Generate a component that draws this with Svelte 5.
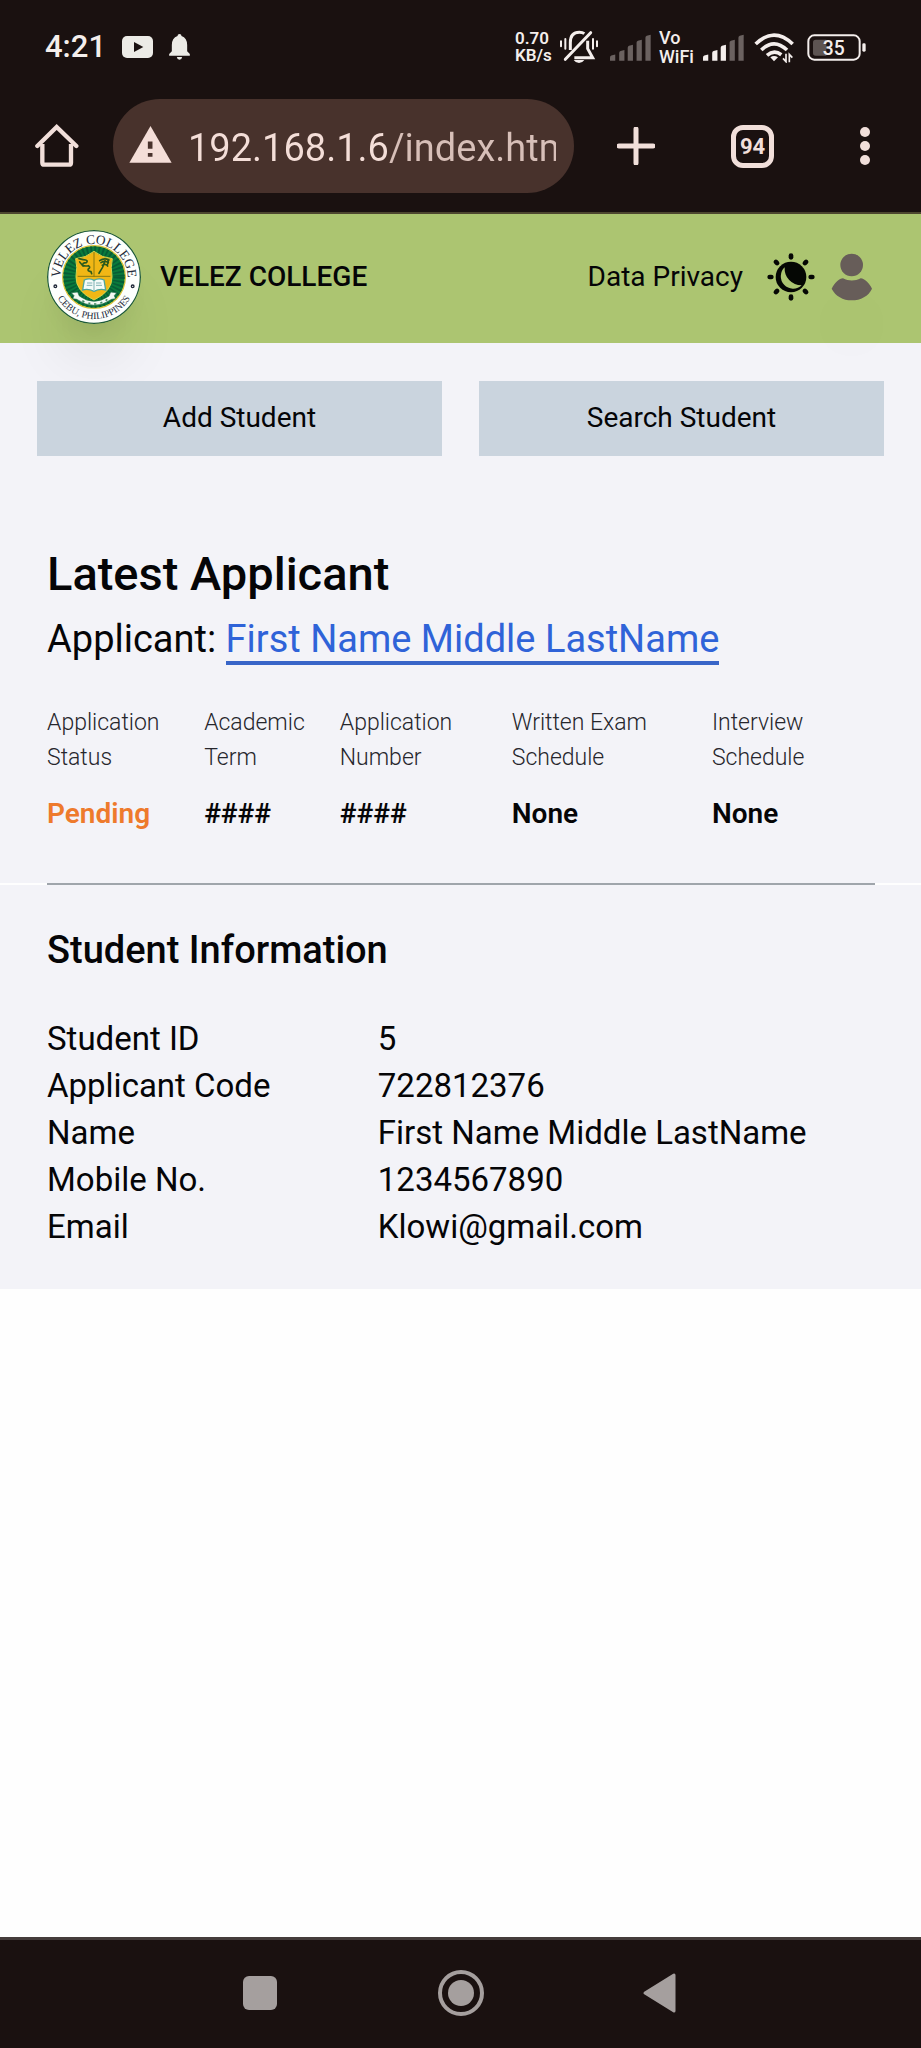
<script>
  const bars = [
    [0, 62],
    [28, 48],
    [54, 32],
    [81, 17],
    [108, 2],
  ];

  const rays = [0, 45, 90, 135, 180, 225, 270, 315];

  const summary = [
    { label: 'Application Status', value: 'Pending', tone: 'pending' },
    { label: 'Academic Term', value: '####', tone: '' },
    { label: 'Application Number', value: '####', tone: '' },
    { label: 'Written Exam Schedule', value: 'None', tone: '' },
    { label: 'Interview Schedule', value: 'None', tone: '' },
  ];

  const details = [
    ['Student ID', '5'],
    ['Applicant Code', '722812376'],
    ['Name', 'First Name Middle LastName'],
    ['Mobile No.', '1234567890'],
    ['Email', 'Klowi@gmail.com'],
  ];

  let address = $state('192.168.1.6/index.html');
</script>

{#snippet signal(active)}
  <svg class="signal" viewBox="0 0 125 81" width="41" height="27" aria-hidden="true">
    {#each bars as [x, top], i}
      <path
        d="M{x} 81V{top + 9}Q{x} {top + 5} {x + 4} {top + 3}L{x + 16} {top}V81Z"
        fill={i < active ? '#f4eeec' : '#6b6260'}
      />
    {/each}
  </svg>
{/snippet}

<div class="screen">
  <div class="chrome">
    <div class="status">
      <div class="status-left">
        <span class="time">4:21</span>
        <svg viewBox="366 105 93 66" width="31" height="22" aria-hidden="true">
          <rect x="366" y="105" width="93" height="66" rx="15" fill="#ecebe6" />
          <path d="M402 123L430 138L402 153Z" fill="#1a1110" />
        </svg>
        <svg viewBox="509 101 62 78" width="21" height="26" aria-hidden="true">
          <path
            d="M540 101q6 0 6 6q17 6 17 27v19l8 8v5H509v-5l8-8v-19q0-21 17-27q0-6 6-6ZM532 170h16q-1 8-8 8t-8-8Z"
            fill="#ecebe6"
          />
        </svg>
      </div>
      <div class="status-right">
        <span class="tiny rate"><span>0.70</span><span>KB/s</span></span>
        <svg viewBox="300 90 129 102" width="43" height="34" fill="none" stroke="#f4eeec" aria-hidden="true">
          <path d="M334 150V128C334 108 344 97 361 97C367 97 372 98 376 101M386 122V146L401 173H346" stroke-width="9" />
          <path d="M395 98L319 178" stroke-width="9" stroke-linecap="round" />
          <path d="M306 124v15M319 117v29M402 117v29M414 124v15" stroke-width="6" stroke-linecap="round" />
          <path d="M344 180h32q-6 9-16 9t-16-9Z" fill="#f4eeec" stroke="none" />
        </svg>
        {@render signal(0)}
        <span class="tiny vo"><span>Vo</span><span>WiFi</span></span>
        {@render signal(3)}
        <svg viewBox="876 92 141 96" width="47" height="32" fill="none" stroke="#f4eeec" aria-hidden="true">
          <path d="M887 131Q942 78 998 131M904 149Q942 112 981 149M921 165Q942 147 964 163" stroke-width="11" />
          <path d="M931 171Q942 163 954 171L942 183Z" fill="#f4eeec" stroke="none" />
          <path d="M978 160v24l-9-10M988 186v-24l9 10" stroke-width="5" />
        </svg>
        <svg viewBox="1040 98 177 81" width="59" height="27" aria-hidden="true">
          <rect x="1044" y="102" width="154" height="73" rx="18" fill="none" stroke="#f4eeec" stroke-width="6" />
          <path d="M1066 115h32v48h-32q-8 0-8-8v-32q0-8 8-8Z" fill="#5d5452" />
          <rect x="1206" y="126" width="10" height="25" rx="4" fill="#f4eeec" />
          <text x="1120" y="160" text-anchor="middle" class="battery">35</text>
        </svg>
      </div>
    </div>

    <div class="toolbar">
      <button class="tool home" aria-label="Home">
        <svg viewBox="104 372 132 132" width="44" height="44" fill="none" stroke="#f1dfda" stroke-width="13" aria-hidden="true">
          <path d="M111 438L169 381L228 438" stroke-linecap="round" stroke-linejoin="miter" />
          <path d="M126 432V488Q126 494 132 494H206Q212 494 212 488V432" />
        </svg>
      </button>
      <div class="address">
        <svg viewBox="386 375 128 112" width="43" height="37" aria-hidden="true">
          <path d="M450 375L514 486H386Z" fill="#f4ded8" />
          <path d="M442 422h14v22h-14ZM442 457h14v11h-14Z" fill="#48322c" />
        </svg>
        <input type="text" aria-label="Address" bind:value={address} />
      </div>
      <button class="tool" aria-label="New tab">
        <svg viewBox="0 0 38 38" width="38" height="38" aria-hidden="true">
          <path d="M19 2V36M2 19H36" stroke="#f1dfda" stroke-width="5" stroke-linecap="round" />
        </svg>
      </button>
      <button class="tool" aria-label="Open tabs"><span class="tabs">94</span></button>
      <button class="tool" aria-label="Menu">
        <svg viewBox="0 0 10 38" width="10" height="38" fill="#f1dfda" aria-hidden="true">
          <circle cx="5" cy="5" r="5" /><circle cx="5" cy="19" r="5" /><circle cx="5" cy="33" r="5" />
        </svg>
      </button>
    </div>
  </div>

  <header class="site">
    <svg class="logo" viewBox="0 0 282 282" width="94" height="94" role="img" aria-label="College seal">
      <defs>
        <path id="ring-top" d="M43 167A101 101 0 1 1 239 167" />
        <path id="ring-bottom" d="M15 141A126 126 0 0 0 267 141" />
      </defs>
      <circle cx="141" cy="141" r="139" fill="#fdfffd" stroke="#1f5b3d" stroke-width="4" />
      <circle cx="141" cy="141" r="94" fill="#0a7a3c" stroke="#dcc23a" stroke-width="4" />
      <circle cx="141" cy="141" r="75" fill="none" stroke="#075c35" stroke-width="34" stroke-dasharray="5 6" />
      <path d="M141 64Q116 84 86 86Q92 112 87 140Q86 184 141 210Q196 184 195 140Q190 112 196 86Q166 84 141 64Z" fill="#f1b715" stroke="#d6d24a" stroke-width="3" />
      <path d="M141 66V141M92 139H190" stroke="#8a7a10" stroke-width="3" />
      <g fill="none" stroke="#2b5a1c" stroke-width="5" stroke-linecap="round">
        <path d="M96 86q14 4 20 4q8 2 2 8q-14 0-10 9q10 2 16 0q8 4 0 10q-4 6 8 8l2 6M98 96l10 12" />
        <path d="M158 92q14-10 28-2M162 98q12-8 22 0M166 106q10-6 16 2M174 92q-4 18-18 38M182 88q4 8 0 14" />
      </g>
      <path d="M112 150Q128 143 141 151Q155 143 171 150L176 180Q158 175 141 184Q124 175 107 180Z" fill="#f4fbf8" stroke="#4fa59c" stroke-width="4" />
      <path d="M120 159h16M119 166h17M147 159h16M147 166h18M141 152v28" stroke="#7fb1b3" stroke-width="3" />
      <path d="M73 188L92 186L97 198Q141 230 186 198L191 186L209 188L202 197L206 206L194 208Q141 244 89 208L77 206L81 197Z" fill="#f3f9f3" stroke="#1a6b43" stroke-width="2" />
      <path d="M106 212l6 4M124 220h6M141 222h7M160 219l6-2M176 212l5-4" stroke="#3f8a62" stroke-width="5" />
      <text class="seal top"><textPath href="#ring-top" startOffset="50%" text-anchor="middle">VELEZ COLLEGE</textPath></text>
      <text class="seal bottom"><textPath href="#ring-bottom" startOffset="50%" text-anchor="middle">CEBU, PHILIPPINES</textPath></text>
      <circle cx="25" cy="169" r="4" fill="none" stroke="#222a3a" stroke-width="4" />
      <circle cx="257" cy="169" r="4" fill="none" stroke="#222a3a" stroke-width="4" />
    </svg>
    <span class="brand">VELEZ COLLEGE</span>
    <nav>
      <a href="#privacy">Data Privacy</a>
      <button class="icon" aria-label="Toggle theme">
        <svg viewBox="-72 -72 144 144" width="48" height="48" aria-hidden="true">
          <circle r="46" fill="#050704" />
          <path d="M-19-29A35 35 0 1 0 32 25A50 50 0 0 1-19-29Z" fill="#acc571" />
          {#each rays as angle}
            <path d="M0-64V-59" stroke="#050704" stroke-width="14" stroke-linecap="round" transform="rotate({angle})" />
          {/each}
        </svg>
      </button>
      <button class="icon avatar" aria-label="Account">
        <svg viewBox="1104 161 141 144" width="47" height="48" fill="#675d59" aria-hidden="true">
          <circle cx="1175" cy="197" r="34" />
          <path d="M1115 268C1124 250 1138 237 1149 237C1166 246 1185 246 1202 237C1214 238 1228 252 1236 268C1226 290 1202 303 1175 303C1149 303 1126 290 1115 268Z" />
        </svg>
      </button>
    </nav>
  </header>

  <main>
    <section class="panel">
      <div class="actions">
        <button>Add Student</button>
        <button>Search Student</button>
      </div>
      <div class="latest">
        <h1>Latest Applicant</h1>
        <p>Applicant: <a href="#applicant">First Name Middle LastName</a></p>
        <table>
          <thead>
            <tr>
              {#each summary as item}<th scope="col">{item.label}</th>{/each}
            </tr>
          </thead>
          <tbody>
            <tr>
              {#each summary as item}<td class={item.tone}>{item.value}</td>{/each}
            </tr>
          </tbody>
        </table>
      </div>
    </section>
    <div class="divider"><hr /></div>
    <section class="panel info">
      <h2>Student Information</h2>
      <dl>
        {#each details as [term, value]}
          <dt>{term}</dt>
          <dd>{value}</dd>
        {/each}
      </dl>
    </section>
  </main>

  <div class="system">
    <button aria-label="Recent apps">
      <svg viewBox="0 0 48 48" width="48" height="48" aria-hidden="true"><rect x="6" y="7" width="34" height="34" rx="6" fill="#a59f9e" /></svg>
    </button>
    <button aria-label="Home screen">
      <svg viewBox="0 0 48 48" width="48" height="48" aria-hidden="true">
        <circle cx="24" cy="24" r="21" fill="none" stroke="#a59f9e" stroke-width="4" />
        <circle cx="24" cy="24" r="13" fill="#a59f9e" />
      </svg>
    </button>
    <button aria-label="Back">
      <svg viewBox="0 0 48 48" width="48" height="48" aria-hidden="true">
        <path d="M8 24L37 6V42Z" fill="#a59f9e" stroke="#a59f9e" stroke-width="3" stroke-linejoin="round" />
      </svg>
    </button>
  </div>
</div>

<style>
  :global(body) {
    margin: 0;
    background: #fefefe;
  }

  .screen {
    display: flex;
    flex-direction: column;
    min-height: 100vh;
    font-family: Roboto, 'Liberation Sans', sans-serif;
    color: #050507;
  }

  button {
    border: 0;
    padding: 0;
    background: none;
    font: inherit;
    color: inherit;
    cursor: pointer;
  }

  svg {
    display: block;
    flex: none;
  }

  .chrome {
    background: #1a1110;
    border-bottom: 2px solid #4d472f;
    padding-bottom: 19px;
  }

  .status {
    display: flex;
    justify-content: space-between;
    align-items: center;
    height: 94px;
    padding: 0 55px 0 45px;
    box-sizing: border-box;
    color: #f4eeec;
  }

  .status-left {
    display: flex;
    align-items: center;
    gap: 16px;
  }

  .status-right {
    display: flex;
    align-items: center;
    gap: 8px;
  }

  .time {
    font-size: 31px;
    font-weight: 500;
    line-height: 36px;
  }

  .tiny {
    display: flex;
    flex-direction: column;
    width: 36px;
    font-weight: 500;
    white-space: nowrap;
  }

  .rate {
    font-size: 17px;
    font-weight: 600;
    line-height: 17px;
  }

  .vo {
    font-size: 18px;
    line-height: 19px;
  }

  .battery {
    font-size: 58px;
    font-weight: 500;
    fill: #f4eeec;
  }

  .toolbar {
    display: grid;
    grid-template-columns: 113px minmax(0, 1fr) 123px 111px 113px;
    align-items: center;
    padding-top: 5px;
  }

  .tool {
    display: flex;
    justify-content: center;
    align-items: center;
    height: 94px;
  }

  .address {
    display: flex;
    align-items: center;
    gap: 16px;
    height: 94px;
    box-sizing: border-box;
    padding: 0 18px 0 16px;
    border-radius: 47px;
    background: #48322c;
  }

  .address svg {
    margin-bottom: 4px;
  }

  .address input {
    flex: 1;
    min-width: 0;
    height: 56px;
    border: 0;
    padding: 4px 0 0;
    outline: 0;
    font: 400 38px Roboto, 'Liberation Sans', sans-serif;
    color: transparent;
    background: linear-gradient(90deg, #f4ded8 200px, #d7bfb8 200px);
    background-clip: text;
    -webkit-background-clip: text;
  }

  .tabs {
    width: 43px;
    height: 43px;
    box-sizing: border-box;
    border: 5px solid #f1dfda;
    border-radius: 12px;
    font-size: 22px;
    font-weight: 700;
    line-height: 33px;
    color: #f1dfda;
  }

  .site {
    position: relative;
    z-index: 1;
    display: flex;
    align-items: center;
    padding: 16px 46px 19px 47px;
    background: #acc571;
    font-size: 28px;
    line-height: 47px;
  }

  .logo {
    border-radius: 50%;
    box-shadow: 0 47px 59px -12px rgb(0 0 0 / 8%), 0 19px 23px -14px rgb(0 0 0 / 8%);
  }

  .seal {
    font-family: 'Liberation Serif', serif;
    fill: #222a3a;
  }

  .seal.top {
    font-size: 40px;
  }

  .seal.bottom {
    font-size: 29px;
  }

  .brand {
    margin-left: 19px;
    font-weight: 500;
  }

  nav {
    display: flex;
    align-items: center;
    margin-left: auto;
  }

  nav a {
    margin-right: 24px;
    color: inherit;
    text-decoration: none;
  }

  .brand,
  nav a {
    padding-bottom: 2px;
  }

  .avatar {
    margin-left: 13px;
    border-radius: 50%;
    box-shadow: 0 47px 59px -12px rgb(0 0 0 / 8%);
  }

  .panel {
    background: #f3f3f8;
  }

  .actions {
    position: relative;
    z-index: 2;
    display: grid;
    grid-template-columns: 1fr 1fr;
    gap: 37px;
    padding: 38px 37px 0;
  }

  .actions button {
    height: 75px;
    padding-bottom: 2px;
    background: #cad4de;
    font-size: 28px;
  }

  .latest {
    padding: 85px 47px 46px;
  }

  h1 {
    margin: 0;
    font-size: 47px;
    font-weight: 500;
    line-height: 66px;
  }

  p {
    margin: 4px 0 38px;
    font-size: 38px;
    line-height: 56px;
  }

  p a {
    color: #2f63d8;
    text-decoration: none;
    border-bottom: 4px solid #3865c8;
  }

  table {
    width: 100%;
    table-layout: fixed;
    border-collapse: collapse;
    text-align: left;
  }

  th,
  td {
    padding: 0;
  }

  th {
    padding-bottom: 15px;
    font-size: 23px;
    font-weight: 300;
    line-height: 35px;
    color: #26262c;
  }

  th:nth-child(1) {
    width: 19%;
  }

  th:nth-child(2) {
    width: 16.4%;
  }

  th:nth-child(3) {
    width: 20.8%;
  }

  th:nth-child(4) {
    width: 24.2%;
  }

  td {
    font-size: 28px;
    font-weight: 600;
    line-height: 47px;
  }

  .pending {
    color: #ee7a2c;
  }

  .divider {
    padding: 0 46px 0 47px;
    background: #fefefe;
  }

  hr {
    height: 2px;
    margin: 0;
    border: 0;
    background: #9fa5ab;
  }

  .info {
    padding: 37px 47px 39px;
  }

  h2 {
    margin: 0 0 37px;
    font-size: 38px;
    font-weight: 500;
    line-height: 56px;
  }

  dl {
    display: grid;
    grid-template-columns: 2fr 3fr;
    margin: 0;
    font-size: 33px;
    line-height: 47px;
  }

  dd {
    margin: 0;
  }

  .system {
    display: flex;
    justify-content: center;
    margin-top: auto;
    border-top: 3px solid #453c3b;
    background: #1a1110;
  }

  .system button {
    display: flex;
    justify-content: center;
    align-items: center;
    width: 200px;
    height: 108px;
    padding-bottom: 3px;
  }
</style>
